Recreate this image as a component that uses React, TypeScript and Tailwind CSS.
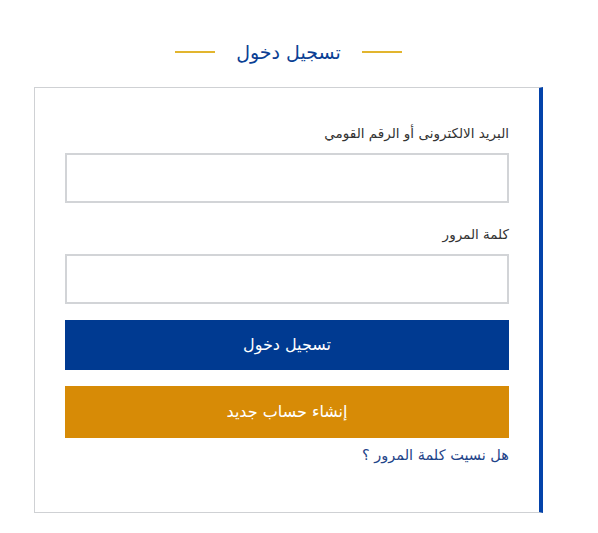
import React from 'react';

const font = { fontFamily: '"DejaVu Sans", "Noto Sans", sans-serif' };

export default function App() {
    return (
        <div className="min-h-[533px] w-[598px] bg-white" style={font}>
            <div dir="rtl" className="ml-[34px] mr-auto w-[509px] pt-[36px]">
                {/* Heading with side rules */}
                <div className="flex h-[32px] items-center justify-center gap-[21px]">
                    <span className="h-[2px] w-[40px] bg-[#e2b52e]" />
                    <h1 className="text-[19px] leading-[32px] text-[#0b3f94]">تسجيل دخول</h1>
                    <span className="h-[2px] w-[40px] bg-[#e2b52e]" />
                </div>

                {/* Card */}
                <div className="mt-[19px] h-[426px] border-y border-l border-[#cfd1d4] border-r-4 border-r-[#0443aa] px-[30px] pt-[35px]">
                    <label className="block text-[13.5px] leading-[20px] text-[#333]">البريد الالكترونى أو الرقم القومي</label>
                    <input
                        type="text"
                        className="mt-[10px] block h-[50px] w-full border-2 border-[#d2d4d7] bg-white outline-none"
                    />

                    <label className="mt-[21px] block text-[13.5px] leading-[20px] text-[#333]">كلمة المرور</label>
                    <input
                        type="password"
                        className="mt-[10px] block h-[50px] w-full border-2 border-[#d2d4d7] bg-white outline-none"
                    />

                    <button className="mt-[16px] flex h-[50px] w-full items-center justify-center bg-[#003a91] text-[16px] text-white">
                        تسجيل دخول
                    </button>
                    <button className="mt-[16px] flex h-[52px] w-full items-center justify-center bg-[#d78b06] text-[16px] text-white">
                        إنشاء حساب جديد
                    </button>

                    <a href="#" className="mt-[7px] block text-[14.5px] leading-[20px] text-[#1f4489]">
                        هل نسيت كلمة المرور ؟
                    </a>
                </div>
            </div>
        </div>
    );
}
